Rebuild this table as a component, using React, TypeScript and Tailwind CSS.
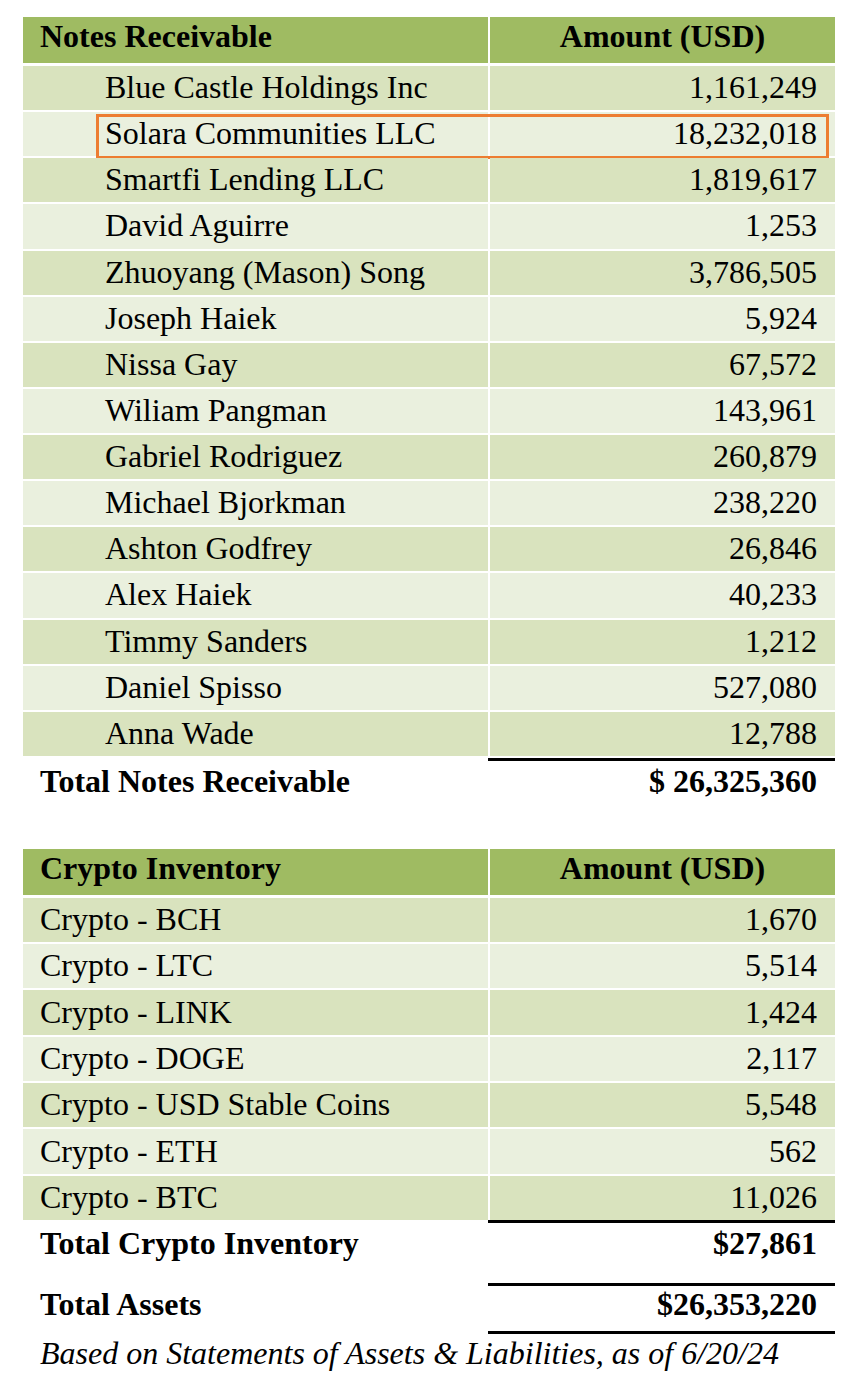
const notes = [
  ["Blue Castle Holdings Inc", "1,161,249"],
  ["Solara Communities LLC", "18,232,018"],
  ["Smartfi Lending LLC", "1,819,617"],
  ["David Aguirre", "1,253"],
  ["Zhuoyang (Mason) Song", "3,786,505"],
  ["Joseph Haiek", "5,924"],
  ["Nissa Gay", "67,572"],
  ["Wiliam Pangman", "143,961"],
  ["Gabriel Rodriguez", "260,879"],
  ["Michael Bjorkman", "238,220"],
  ["Ashton Godfrey", "26,846"],
  ["Alex Haiek", "40,233"],
  ["Timmy Sanders", "1,212"],
  ["Daniel Spisso", "527,080"],
  ["Anna Wade", "12,788"],
];

const crypto = [
  ["Crypto - BCH", "1,670"],
  ["Crypto - LTC", "5,514"],
  ["Crypto - LINK", "1,424"],
  ["Crypto - DOGE", "2,117"],
  ["Crypto - USD Stable Coins", "5,548"],
  ["Crypto - ETH", "562"],
  ["Crypto - BTC", "11,026"],
];

const HeaderRow = ({ title }: { title: string }) => (
  <div className="grid grid-cols-[465px_345px] gap-x-[2px] h-[46px] font-bold">
    <div className="bg-[#9fbb62] flex items-center pl-[17px] pb-[8px]">{title}</div>
    <div className="bg-[#9fbb62] flex items-center justify-center pb-[8px]">Amount (USD)</div>
  </div>
);

const DataRow = ({
  name,
  value,
  dark,
  indent,
  pitch,
  highlight,
}: {
  name: string;
  value: string;
  dark: boolean;
  indent: boolean;
  pitch: string;
  highlight?: boolean;
}) => {
  const bg = dark ? "bg-[#d9e3be]" : "bg-[#eaf0de]";
  return (
    <div className={`relative grid grid-cols-[465px_345px] gap-x-[2px] ${pitch}`}>
      <div className={`${bg} flex items-center pb-[2px] ${indent ? "pl-[82px]" : "pl-[17px]"}`}>{name}</div>
      <div className={`${bg} flex items-center justify-end pb-[2px] pr-[18px]`}>{value}</div>
      {highlight && (
        <div className="absolute left-[73px] right-[6px] top-[2px] bottom-[-3px] border-[3px] border-[#ed7d31]" />
      )}
    </div>
  );
};

const Rule = () => (
  <div className="grid grid-cols-[465px_347px]">
    <div />
    <div className="h-[3px] bg-black" />
  </div>
);

const TotalRow = ({ label, value, h }: { label: string; value: string; h: string }) => (
  <div className={`grid grid-cols-[465px_345px] gap-x-[2px] ${h} font-bold`}>
    <div className="flex items-center pl-[17px]">{label}</div>
    <div className="flex items-center justify-end pr-[18px]">{value}</div>
  </div>
);

export default function App() {
  return (
    <div
      className="min-h-[1396px] bg-white text-black pl-[23px] pt-[17px] text-[32px] leading-none"
      style={{ fontFamily: '"Liberation Serif", "Times New Roman", serif' }}
    >
      <div className="w-[812px]">
        <HeaderRow title="Notes Receivable" />
        <div className="flex flex-col gap-y-[2px] mt-[3px]">
          {notes.map(([n, v], i) => (
            <DataRow
              key={n}
              name={n}
              value={v}
              dark={i % 2 === 0}
              indent
              pitch="h-[44.14px]"
              highlight={i === 1}
            />
          ))}
        </div>
        <div className="mt-[2px]">
          <Rule />
        </div>
        <TotalRow label="Total Notes Receivable" value="$ 26,325,360" h="h-[40px]" />

        <div className="mt-[48px]">
          <HeaderRow title="Crypto Inventory" />
        </div>
        <div className="flex flex-col gap-y-[2px] mt-[3px]">
          {crypto.map(([n, v], i) => (
            <DataRow key={n} name={n} value={v} dark={i % 2 === 0} indent={false} pitch="h-[44.3px]" />
          ))}
        </div>
        <Rule />
        <TotalRow label="Total Crypto Inventory" value="$27,861" h="h-[40px]" />
        <div className="mt-[20px]">
          <Rule />
        </div>
        <div className="grid grid-cols-[465px_345px] gap-x-[2px] h-[45px] font-bold">
          <div className="flex items-center pl-[17px] pb-[8px]">Total Assets</div>
          <div className="flex items-center justify-end pr-[18px] pb-[8px]">$26,353,220</div>
        </div>
        <Rule />
        <div className="italic pl-[17px] h-[40px] flex items-center pb-[2px]">
          Based on Statements of Assets &amp; Liabilities, as of 6/20/24
        </div>
      </div>
    </div>
  );
}
